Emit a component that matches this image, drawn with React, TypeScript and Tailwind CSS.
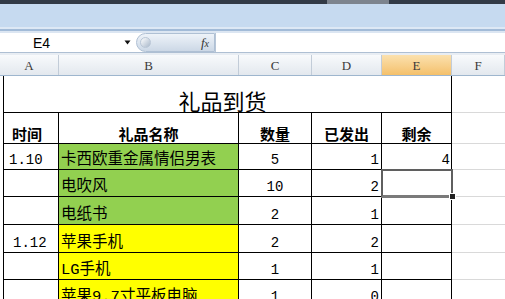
import React from "react";

const mono = { fontFamily: '"Liberation Mono","Noto Sans CJK SC",monospace' };

type Row = {
  h: string;
  a: string;
  aPad: string;
  b: string;
  bg: string;
  c: string;
  d: string;
  e: string;
};

const rows: Row[] = [
  { h: "h-[26px]", a: "1.10", aPad: "pl-[5px]", b: "卡西欧重金属情侣男表", bg: "bg-[#92D050]", c: "5", d: "1", e: "4" },
  { h: "h-[27px]", a: "", aPad: "", b: "电吹风", bg: "bg-[#92D050]", c: "10", d: "2", e: "" },
  { h: "h-[28px]", a: "", aPad: "", b: "电纸书", bg: "bg-[#92D050]", c: "2", d: "1", e: "" },
  { h: "h-[28px]", a: "1.12", aPad: "pl-[9px]", b: "苹果手机", bg: "bg-[#FFFF00]", c: "2", d: "2", e: "" },
  { h: "h-[27px]", a: "", aPad: "", b: "LG手机", bg: "bg-[#FFFF00]", c: "1", d: "1", e: "" },
  { h: "h-[27px]", a: "", aPad: "", b: "苹果9.7寸平板电脑", bg: "bg-[#FFFF00]", c: "1", d: "0", e: "" },
];

function ColHead({ w, label, active }: { w: string; label: string; active?: boolean }) {
  return (
    <div
      className={`${w} h-full flex items-center justify-center border-r border-[#C2CCD8] ${
        active ? "bg-gradient-to-b from-[#FBE1AE] to-[#F4C06A]" : "bg-gradient-to-b from-[#F8FAFC] to-[#E3E8EE]"
      }`}
    >
      <span className="text-[13px] text-[#3a3a3a] leading-none" style={{ fontFamily: '"Liberation Serif",serif' }}>
        {label}
      </span>
    </div>
  );
}

export default function App() {
  return (
    <div
      className="w-[505px] h-[299px] overflow-hidden bg-white relative flex flex-col"
      style={{ fontFamily: '"Noto Sans CJK SC",sans-serif' }}
    >
      {/* top dark strip */}
      <div className="h-[4px] shrink-0 bg-[#323a46] flex">
        <div className="w-[327px]" />
        <div className="w-[62px] bg-[#7d848e]" />
      </div>
      {/* ribbon */}
      <div className="h-[23px] shrink-0 bg-[#C6DAF0]" />
      <div className="h-[2px] shrink-0 bg-[#DDE8F5]" />
      <div className="h-[2px] shrink-0 bg-[#A2BBD8]" />
      <div className="h-[2px] shrink-0 bg-[#DCE6F2]" />
      {/* formula bar */}
      <div className="h-[19px] shrink-0 flex bg-white">
        <div className="w-[124px] flex items-center">
          <span className="pl-[33px] text-[14px] leading-none text-black" style={{ fontFamily: '"Liberation Sans",sans-serif' }}>
            E4
          </span>
        </div>
        <div className="w-[12px] flex items-center justify-start">
          <svg width="7" height="5" viewBox="0 0 7 5">
            <path d="M0.5 0.5 L6.5 0.5 L3.5 4.5 Z" fill="#111" />
          </svg>
        </div>
        <div className="w-[79px] relative flex items-center justify-end rounded-l-full border border-[#AFC0D4] bg-gradient-to-b from-[#EEF3F9] to-[#CCD8E6] pr-[5px]">
          <div className="absolute left-[3px] top-[3px] w-[11px] h-[11px] rounded-full bg-gradient-to-br from-[#FFFFFF] to-[#A9B8CA] border border-[#B9C6D6]" />
          <span className="text-[13px] italic leading-none text-[#333]" style={{ fontFamily: '"Liberation Serif",serif' }}>
            f<span className="text-[10px]">x</span>
          </span>
        </div>
        <div className="flex-1 border-l border-[#B7C6D8]" />
      </div>
      <div className="h-[1px] shrink-0 bg-[#AEBFD3]" />
      <div className="h-[2px] shrink-0 bg-[#E8EDF3]" />
      {/* column headers */}
      <div className="h-[21px] shrink-0 flex border-b border-[#9EB6CE]">
        <ColHead w="w-[59px]" label="A" />
        <ColHead w="w-[180px]" label="B" />
        <ColHead w="w-[73px]" label="C" />
        <ColHead w="w-[70px]" label="D" />
        <ColHead w="w-[70px]" label="E" active />
        <ColHead w="flex-1" label="F" />
      </div>

      {/* sheet body */}
      <div className="relative flex flex-col">
        {/* title row */}
        <div className="h-[37px] flex">
          <div className="w-[3px]" />
          <div className="w-[449px] border-l border-r border-b border-black flex items-end justify-center pb-[1px]">
            <span className="text-[22px] leading-none text-black pr-[10px]">礼品到货</span>
          </div>
          <div className="flex-1 border-b border-[#D9D9D9]" />
        </div>
        {/* header row */}
        <div className="h-[31px] flex">
          <div className="w-[3px]" />
          <div className="w-[56px] border-l border-r border-b border-black flex items-end pl-[8px] pb-[2px]">
            <span className="text-[15px] font-bold leading-none">时间</span>
          </div>
          <div className="w-[180px] border-r border-b border-black flex items-end justify-center pb-[2px]">
            <span className="text-[15px] font-bold leading-none">礼品名称</span>
          </div>
          <div className="w-[73px] border-r border-b border-black flex items-end justify-center pb-[2px]">
            <span className="text-[15px] font-bold leading-none">数量</span>
          </div>
          <div className="w-[70px] border-r border-b border-black flex items-end justify-center pb-[2px]">
            <span className="text-[15px] font-bold leading-none">已发出</span>
          </div>
          <div className="w-[70px] border-r border-b border-black flex items-end justify-center pb-[2px]">
            <span className="text-[15px] font-bold leading-none">剩余</span>
          </div>
          <div className="flex-1 border-b border-[#D9D9D9]" />
        </div>
        {/* data rows */}
        {rows.map((r, i) => (
          <div key={i} className={`${r.h} flex shrink-0`}>
            <div className="w-[3px]" />
            <div className={`w-[56px] border-l border-r border-b border-black flex items-end pb-[2px] ${r.aPad}`}>
              <span className="text-[14px] leading-none" style={mono}>
                {r.a}
              </span>
            </div>
            <div className={`w-[180px] border-r border-b border-black flex items-end pl-[2px] pb-[1px] ${r.bg}`}>
              <span className="text-[15.5px] leading-none whitespace-nowrap" style={mono}>
                {r.b}
              </span>
            </div>
            <div className="w-[73px] border-r border-b border-black flex items-end justify-center pb-[2px]">
              <span className="text-[14px] leading-none" style={mono}>
                {r.c}
              </span>
            </div>
            <div className="w-[70px] border-r border-b border-black flex items-end justify-end pr-[2px] pb-[2px]">
              <span className="text-[14px] leading-none" style={mono}>
                {r.d}
              </span>
            </div>
            <div className="w-[70px] border-r border-b border-black flex items-end justify-end pr-[1px] pb-[2px]">
              <span className="text-[14px] leading-none" style={mono}>
                {r.e}
              </span>
            </div>
            <div className="flex-1 border-b border-[#D9D9D9]" />
          </div>
        ))}

        {/* selection E4 */}
        <div className="absolute left-[381px] top-[93px] w-[72px] h-[29px] border-2 border-[#5f5f5f] border-b-[3px] border-b-[#7a7a7a]">
          <div className="absolute right-[-5px] bottom-[-5px] w-[7px] h-[7px] bg-[#222] border border-white" />
        </div>
      </div>
    </div>
  );
}
